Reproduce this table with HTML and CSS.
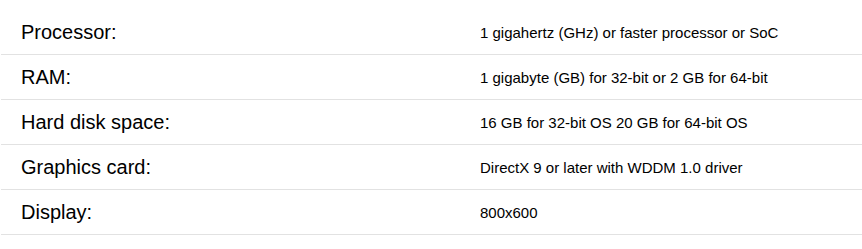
FILE: index.html
```html
<!DOCTYPE html>
<html lang="en">
<head>
    <meta charset="UTF-8">
    <meta name="viewport" content="width=device-width, initial-scale=1.0">
    <title>System requirements</title>
    <link rel="stylesheet" href="styles.css">
</head>
<body>
    <div class="specs">
        <div class="row">
            <div class="label">Processor:</div>
            <div class="value">1 gigahertz (GHz) or faster processor or SoC</div>
        </div>
        <div class="row">
            <div class="label">RAM:</div>
            <div class="value">1 gigabyte (GB) for 32-bit or 2 GB for 64-bit</div>
        </div>
        <div class="row">
            <div class="label">Hard disk space:</div>
            <div class="value">16 GB for 32-bit OS 20 GB for 64-bit OS</div>
        </div>
        <div class="row">
            <div class="label">Graphics card:</div>
            <div class="value">DirectX 9 or later with WDDM 1.0 driver</div>
        </div>
        <div class="row">
            <div class="label">Display:</div>
            <div class="value">800x600</div>
        </div>
    </div>
</body>
</html>
```

FILE: styles.css
```css
body{
    margin: 0;
    background: #fff;
    font-family: "Liberation Sans", Arial, sans-serif;
    color: #000;
}
.specs{
    margin: 10px 0 0 1px;
}
.row{
    display: grid;
    grid-template-columns: 459px 1fr;
    align-items: center;
    height: 44px;
    padding-left: 20px;
    border-bottom: 1px solid #e2e2e2;
}
.label{
    font-size: 20px;
    padding-top: 1px;
}
.value{
    font-size: 15px;
}
```
